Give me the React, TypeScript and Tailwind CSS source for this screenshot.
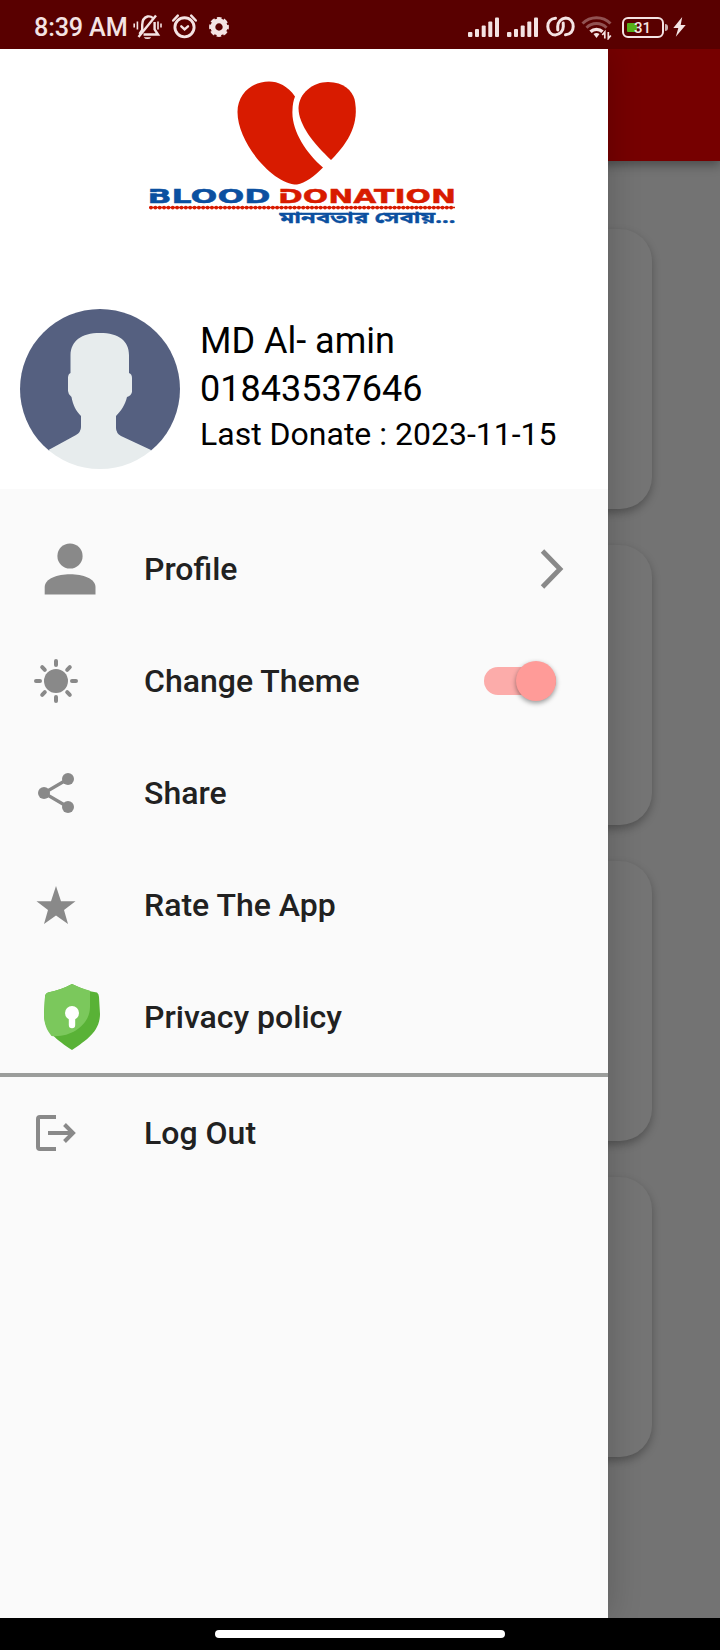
import React from "react";

function SignalBars() {
  return (
    <svg width="31" height="21" viewBox="0 0 31 21" fill="#f4e3e3">
      <rect x="0" y="15" width="4.4" height="5" rx="1" />
      <rect x="7" y="12" width="4" height="8" rx="1" />
      <rect x="13.7" y="8.5" width="4" height="11.5" rx="1" />
      <rect x="20.3" y="4.5" width="4" height="15.5" rx="1" />
      <rect x="27" y="0.5" width="4" height="19.5" rx="1" />
    </svg>
  );
}

function StatusBar() {
  return (
    <header className="flex h-[49px] shrink-0 items-center bg-[#590000] pt-[5px] pl-[34px] text-[#f4e3e3]">
      <span className="w-[98px] pt-[2px] whitespace-nowrap text-[25.2px] leading-none font-medium tracking-[-0.15px]">8:39 AM</span>
      <svg width="30" height="28" viewBox="132 13 30 28" fill="none" stroke="#f4e3e3" strokeWidth="2.4" className="mr-[9px]">
        <path d="M139.5 34 l2.7 -4 v-5 c0 -5 2 -7.5 5.3 -8.5 c2 -.4 4 .2 5.5 1.6 M154.6 22 v7.5 l3.4 5 h-14.500" />
        <path d="M138.5 37 L156 15.500" />
        <path d="M143.800 37.200 h7.400 a4 3 0 0 1 -7.400 0" fill="#f4e3e3" stroke="none" />
        <path d="M134.200 23.500 v4 M137.400 21.500 v8 M158 21.500 v8 M161 23.500 v4" strokeWidth="1.6" />
      </svg>
      <svg width="28" height="28" viewBox="171 13 28 28" fill="none" stroke="#f4e3e3" strokeWidth="2.900" strokeLinecap="round" className="mr-[9px]">
        <circle cx="184.500" cy="27.300" r="9.600" />
        <path d="M181.300 26.300 l3.300 3 l3.400 -3" strokeWidth="2.4" />
        <path d="M173.200 20.500 l4.600 -4.800 M195.800 20.500 l-4.600 -4.800" strokeWidth="2.500" />
      </svg>
      <svg width="22" height="24" viewBox="-11 -12 22 24" fill="none" stroke="#f4e3e3">
        <circle r="6.100" strokeWidth="4.800" />
        <circle r="8.800" strokeWidth="2.200" strokeDasharray="4.600 2.312" strokeDashoffset="2.300" />
      </svg>
      <div className="ml-[238px] flex items-center">
        <SignalBars />
        <div className="w-2" />
        <SignalBars />
        <svg width="30" height="24" viewBox="544 15 30 24" fill="none" stroke="#f4e3e3" strokeWidth="3" strokeLinecap="round" className="ml-[7px]">
          <path d="M554.500 18.200 C549.500 18.600 546.800 22 546.800 26.500 C546.800 31.500 550 35 554.300 35 C559 34.600 562.300 31 562.300 26.500 L562.200 23" />
          <path d="M564.500 34.800 C569.500 34.400 572.200 31 572.200 26.500 C572.200 21.500 569 18 564.700 18 C560 18.400 556.700 22 556.700 26.500 L556.800 30" />
        </svg>
        <svg width="32" height="26" viewBox="581 14 32 26" fill="none" stroke="#f4e3e3" className="ml-[6px]">
          <path d="M582.500 23.500 a20 20 0 0 1 28 0" strokeWidth="3" opacity=".36" />
          <path d="M586.500 27.700 a14 14 0 0 1 20 0" strokeWidth="3" opacity=".36" />
          <path d="M590.500 31.700 a8.800 8.800 0 0 1 12 0" strokeWidth="3.400" />
          <path d="M593.500 34 a5 4.500 0 0 1 6 0 l-3 4z" fill="#f4e3e3" stroke="none" />
          <path d="M604.800 38.500 v-6.500 l-2.500 3 M608.300 32 v6.500 l2.500 -3" strokeWidth="1.700" />
        </svg>
        <div className="relative ml-[9px] flex h-[21px] w-[42px] items-center rounded-[6px] border-2 border-[#f4e3e3] pl-[3px]">
          <div className="h-[9px] w-[10px] rounded-[1px] bg-[#56b01a]" />
          <span className="absolute top-px left-[10px] text-[15px] leading-[16px] font-medium">31</span>
        </div>
        <div className="ml-px h-[7px] w-[3px] rounded-r bg-[#c9aeae]" />
        <svg width="13" height="20" viewBox="0 0 13 20" fill="#f4e3e3" className="ml-[5px]">
          <path d="M9.200 0 L0.300 11 h5 L2.800 19.800 L12.700 8 h-5z" />
        </svg>
      </div>
    </header>
  );
}

function Logo() {
  return (
    <svg width="340" height="180" viewBox="130 60 340 180" className="block">
      <g fill="#d81b00">
        <path d="M295 96.500 C288 86 278 81.500 269 81.500 C252 81.500 237.500 94 237.500 112 C237.500 143 273 184.500 297 184.500 C305 183.500 315 175.500 323 167.500 C306 153 291 130 292.500 110 C292.600 105 293.500 100 295 96.500Z" />
        <path d="M331 160 C314 144 298.500 125 298.500 108 C299 93 313 82 328 82 C344 82 352 91 354.500 99 C359.500 122 350 141 331 160Z" />
      </g>
      <g fontFamily="'DejaVu Sans', sans-serif" fontWeight="700" fontSize="19.500" strokeWidth="0.400">
        <text x="147.500" y="203" textLength="123" lengthAdjust="spacingAndGlyphs" fill="#0b50a0" stroke="#0b50a0">BLOOD</text>
        <text x="278" y="203" textLength="178" lengthAdjust="spacingAndGlyphs" fill="#d81b00" stroke="#d81b00">DONATION</text>
      </g>
      <path d="M148 192.700 h14 M279 192.700 h12" stroke="#fff" strokeWidth="1" />
      <path d="M149 207.600 H455" stroke="#d81b00" strokeWidth="1.500" />
      <path d="M151 207.600 H455" stroke="#d81b00" strokeWidth="3.800" strokeLinecap="round" strokeDasharray="0 4.350" />
      <text x="279.500" y="223" fontFamily="'Noto Sans Bengali', 'Noto Sans', sans-serif" fontWeight="700" fontSize="16" textLength="176" lengthAdjust="spacingAndGlyphs" fill="#0b50a0" stroke="#0b50a0" strokeWidth="0.300">মানবতার সেবায়...</text>
    </svg>
  );
}

function Avatar() {
  return (
    <svg width="160" height="160" viewBox="0 0 160 160" className="shrink-0">
      <clipPath id="avatar-clip"><circle cx="80" cy="80" r="80" /></clipPath>
      <g clipPath="url(#avatar-clip)">
        <rect width="160" height="142" fill="#556080" />
        <path d="M80 24 C99 24 109 32 109 46 V64 Q112 65 112 69 V83 Q111 87 107 88 C105 96 101 102 96 107 V119 Q96 124 101 127 L131 141 L150 160 H10 L28.500 141 L56 126 Q61 123 61 118 V107 C56 102 53 96 51.500 88 Q48 85 48 82 V69 Q48 65 50.500 64 V46 C51 32 61 24 80 24Z" fill="#e7eced" />
      </g>
    </svg>
  );
}

function MenuIcon({ children }: { children: React.ReactNode }) {
  return (
    <svg width="80" height="80" viewBox="0 0 80 80" fill="#898989" className="mr-8 shrink-0">
      {children}
    </svg>
  );
}

function MenuRow({ icon, label, children }: { icon: React.ReactNode; label: string; children?: React.ReactNode }) {
  return (
    <li className="flex h-28 items-center pl-8 text-[#212121]">
      <MenuIcon>{icon}</MenuIcon>
      <span className="flex-1 text-[32px] leading-9 font-medium">{label}</span>
      {children}
    </li>
  );
}

const sunIcon = (
  <g stroke="#898989" strokeWidth="4" strokeLinecap="round">
    <circle cx="24" cy="40" r="12" stroke="none" />
    <path d="M24 20v4M24 56v4M4 40h4M40 40h4M10.200 26.200l2.600 2.600M35.200 51.200l2.600 2.600M37.800 26.200l-2.600 2.600M12.800 51.200l-2.600 2.600" />
  </g>
);

const shareIcon = (
  <g>
    <path d="M36 26 L12 40 L36 54" fill="none" stroke="#898989" strokeWidth="3.200" />
    <circle cx="36" cy="26" r="6" />
    <circle cx="12" cy="40" r="6" />
    <circle cx="36" cy="54" r="6" />
  </g>
);

const shieldIcon = (
  <g>
    <path d="M40 7 Q54 14 65 15.500 Q67 17 67 20 L68 37 C68 54 55 63 40 73 C25 63 12 54 12 37 L13 20 Q13 16.500 16 15.500 Q29 13 40 7Z" fill="#59b236" />
    <path d="M40 7 Q49 11.500 58 13.700 V30 C58 47 40 61 19.500 59 C14 52 12 46 12 37 L13 20 Q13 16.500 16 15.500 Q29 13 40 7Z" fill="#7bc85c" />
    <circle cx="40" cy="36" r="7" fill="#fff" />
    <path d="M40 38 v10" stroke="#fff" strokeWidth="6.400" strokeLinecap="round" />
  </g>
);

const logoutIcon = (
  <g fill="none" stroke="#898989" strokeWidth="4">
    <path d="M24 24 H8 Q6 24 6 26 V54 Q6 56 8 56 H24" />
    <path d="M16 40 H41 M32.500 31.500 L41 40 L32.500 48.500" />
  </g>
);

function Drawer() {
  return (
    <aside className="absolute inset-y-0 left-0 z-10 flex w-[608px] flex-col bg-[#fafafa] shadow-[0_0_32px_rgba(0,0,0,0.2)]">
      <section className="h-[440px] shrink-0 bg-white pt-[11px]">
        <div className="pl-[130px]"><Logo /></div>
        <div className="mt-[69px] flex items-center pl-5 text-black">
          <Avatar />
          <div className="mb-[5px] ml-5 whitespace-nowrap">
            <p className="text-[36px] leading-[48px]">MD Al- amin</p>
            <p className="text-[36px] leading-[48px]">01843537646</p>
            <p className="text-[32px] leading-[43px]">Last Donate : 2023-11-15</p>
          </div>
        </div>
      </section>
      <ul className="mt-6">
        <MenuRow
          label="Profile"
          icon={<g><circle cx="38" cy="27" r="12.600" /><path d="M12.700 65.500 V58 C13 41 63.300 41 63.500 58 V65.500Z" /></g>}
        >
          <svg width="28" height="44" viewBox="0 0 28 44" fill="none" stroke="#898989" strokeWidth="4.800" className="mr-[41px]">
            <path d="M3.500 4 L21 22 L3.500 40" />
          </svg>
        </MenuRow>
        <MenuRow label="Change Theme" icon={sunIcon}>
          <div className="mr-[52px] flex h-7 w-[72px] items-center justify-end rounded-full bg-[#fcacaa]">
            <div className="h-10 w-10 shrink-0 rounded-full bg-[#ff9b98] shadow-[0_2px_5px_rgba(0,0,0,0.4)]" />
          </div>
        </MenuRow>
        <MenuRow label="Share" icon={shareIcon} />
        <MenuRow label="Rate The App" icon={<path d="M24 21 L29 36.300 H43.500 L32 45 L36 59 L24 50.400 L12 59 L16 45 L4.500 36.300 H19Z" />} />
        <MenuRow label="Privacy policy" icon={shieldIcon} />
        <li className="h-1 bg-[#9b9d9b]" />
        <MenuRow label="Log Out" icon={logoutIcon} />
      </ul>
    </aside>
  );
}

export default function App() {
  return (
    <div className="flex h-[1650px] w-[720px] flex-col overflow-hidden bg-black font-['Roboto',sans-serif]">
      <StatusBar />
      <main className="relative flex h-[1569px] flex-col overflow-hidden bg-[#737373]">
        <div className="h-28 shrink-0 bg-[#760000] shadow-[0_4px_10px_rgba(0,0,0,0.35)]" />
        <div className="mt-[68px] flex flex-col gap-9 pr-[68px] pl-[68px]">
          {[0, 1, 2, 3].map((n) => (
            <div key={n} className="h-[280px] rounded-[32px] bg-[#747474] shadow-[0_4px_8px_rgba(0,0,0,0.28)]" />
          ))}
        </div>
        <Drawer />
      </main>
      <footer className="flex h-8 items-center justify-center bg-black">
        <div className="h-[8px] w-[290px] rounded-full bg-white" />
      </footer>
    </div>
  );
}
